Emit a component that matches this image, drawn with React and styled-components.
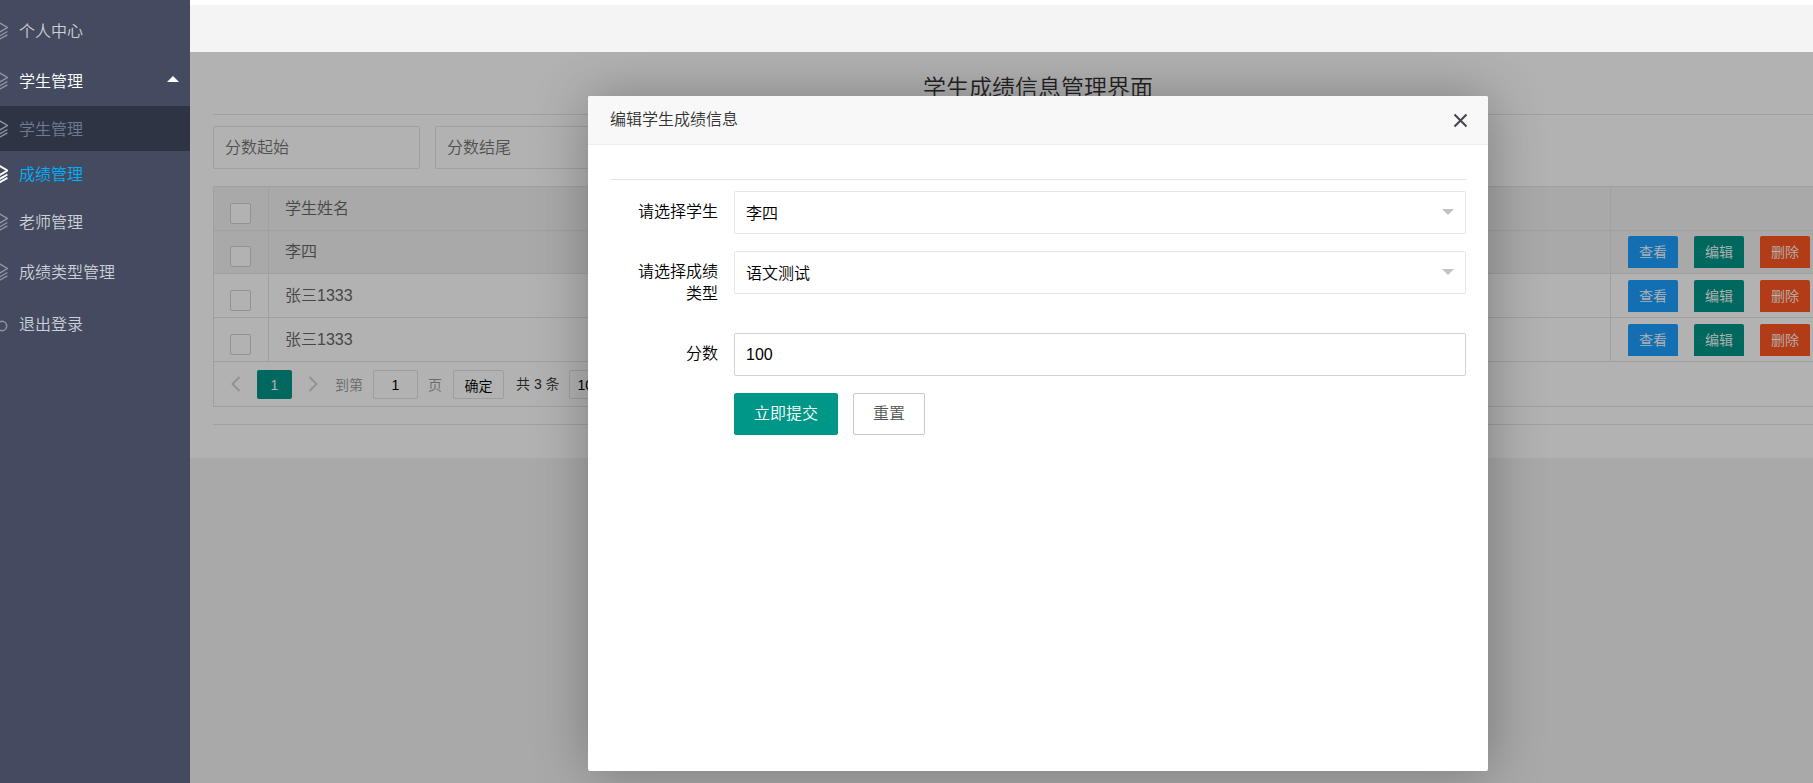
import React from 'react';
import styled, { createGlobalStyle, css } from 'styled-components';

const GlobalStyle = createGlobalStyle`
  * { box-sizing: border-box; }
  body {
    margin: 0;
    overflow: hidden;
    font: 350 16px/22px "Liberation Sans", "Noto Sans CJK SC", sans-serif;
    color: #333;
  }
  button, input, select { font: inherit; color: inherit; margin: 0; }
  button { cursor: pointer; }
`;

const Page = styled.div`
  display: flex;
  height: 100vh;
  overflow: hidden;
`;

const Sidebar = styled.nav`
  flex: 0 0 190px;
  padding-top: 6px;
  background: #444b61;
  overflow: hidden;
`;

const SubMenu = styled.div`
  padding-bottom: 1px;
`;

const MenuLink = styled.a`
  display: flex;
  align-items: center;
  height: ${({ $sub }) => ($sub ? 45 : 50)}px;
  padding-right: 11px;
  background: ${({ $shaded }) => ($shaded ? '#2f3444' : 'transparent')};
  color: ${({ $color }) => $color || '#cdd0d6'};
  text-decoration: none;
`;

const LogoutLink = styled(MenuLink)`
  height: 54px;
`;

const MenuIcon = styled.svg`
  flex: none;
  margin-left: -12px;
  margin-right: 11px;
  color: ${({ $color }) => $color || '#9095a3'};
`;

const MenuCaret = styled.svg`
  margin-bottom: 4px;
`;

const MenuText = styled.span`
  flex: 1;
  padding-top: 2px;
  white-space: nowrap;
`;

const Main = styled.div`
  flex: 1;
  min-width: 0;
  display: flex;
  flex-direction: column;
  overflow: hidden;
`;

const TopBar = styled.header`
  flex: none;
  height: 52px;
  border-top: 5px solid #fff;
  background: #f4f4f4;
`;

/* the framed page is wider than the room beside the menu */
const Pane = styled.main`
  position: relative;
  flex: 1;
  width: calc(100% + 73px);
  background: #f2f2f2;
  overflow: hidden;
`;

const Card = styled.section`
  padding: 20px 23px 33px;
  background: #fff;
`;

const Title = styled.h1`
  margin: 0 0 10px;
  font-size: 23px;
  font-weight: 350;
  line-height: 32px;
  text-align: center;
`;

const Divider = styled.hr`
  height: 1px;
  margin: 0;
  border: 0;
  background: #e6e6e6;
`;

const inputBox = css`
  height: 43px;
  padding: 0 11px;
  border: 1px solid #e6e6e6;
  border-radius: 2px;
  background: #fff;
  outline: none;
`;

const Filters = styled.form`
  display: flex;
  gap: 15px;
  padding: 11px 0 17px;
`;

const FilterInput = styled.input`
  ${inputBox}
  width: 207px;
  &::placeholder { color: #757575; opacity: 1; }
`;

const TableBox = styled.div`
  margin-bottom: 17px;
  border: 1px solid #e6e6e6;
`;

const Table = styled.table`
  width: 100%;
  table-layout: fixed;
  border-collapse: separate;
  border-spacing: 0;
  color: #666;
  tbody tr:first-child td { height: 43px; }
`;

const Row = styled.tr`
  background: ${({ $active }) => ($active ? '#f2f2f2' : '#fff')};
  th, td {
    height: 44px;
    padding: 0 16px;
    border-bottom: 1px solid #e6e6e6;
    border-right: 1px solid #e6e6e6;
    font-weight: 350;
    text-align: left;
  }
  th:first-child, td:first-child { width: 55px; }
  th:last-child, td:last-child { width: 251px; padding-left: 17px; border-right: 0; }
`;

const Check = styled.input`
  appearance: none;
  display: block;
  width: 21px;
  height: 21px;
  margin: 9px 0 0;
  border: 1px solid #d2d2d2;
  border-radius: 2px;
  background: #fff;
`;

const Actions = styled.div`
  display: flex;
  gap: 16px;
`;

const ActionButton = styled.button`
  width: 50px;
  height: 32px;
  padding: 0;
  border: 0;
  border-radius: 2px 2px 0 0;
  background: ${({ $color }) => $color};
  color: #fff;
  font-size: 14px;
`;

const Pager = styled.div`
  display: flex;
  align-items: flex-start;
  height: 44px;
  padding: 8px 0 0 1px;
  font-size: 14px;
  color: #999;
`;

const PageArrow = styled.button`
  display: flex;
  align-items: center;
  justify-content: center;
  width: 42px;
  height: 27px;
  padding: 0;
  border: 0;
  background: none;
  color: #d2d2d2;
`;

const PageNumber = styled.button`
  width: 35px;
  height: 29px;
  padding: 0;
  border: 0;
  border-radius: 2px;
  background: #009688;
  color: #fff;
`;

const PageJump = styled.label`
  display: flex;
  align-items: center;
  gap: 10px;
  margin-left: 1px;
`;

const pagerBox = css`
  height: 29px;
  border: 1px solid #e2e2e2;
  border-radius: 2px;
  background: #fff;
  color: #000;
`;

const PageInput = styled.input`
  ${pagerBox}
  width: 45px;
  padding: 0;
  text-align: center;
`;

const PageConfirm = styled.button`
  ${pagerBox}
  width: 51px;
  margin: 0 12px 0 11px;
  padding: 2px 0 0;
`;

const PageTotal = styled.span`
  margin-right: 9px;
  color: #333;
  line-height: 29px;
`;

const PageSize = styled.select`
  ${pagerBox}
  padding: 0 4px;
`;

const Shade = styled.div`
  position: absolute;
  inset: 0;
  display: flex;
  justify-content: center;
  padding: 44px 0 12px;
  background: rgba(0, 0, 0, 0.3);
`;

const Dialog = styled.section`
  width: 90%;
  max-width: 900px;
  border-radius: 2px;
  background: #fff;
  box-shadow: 1px 1px 56px rgba(0, 0, 0, 0.3);
`;

const DialogHeader = styled.header`
  display: flex;
  align-items: center;
  justify-content: space-between;
  height: 49px;
  padding: 0 20px 0 22px;
  border-bottom: 1px solid #eee;
  border-radius: 2px 2px 0 0;
  background: #f8f8f8;
`;

const DialogTitle = styled.h2`
  margin: 0;
  font-size: 16px;
  font-weight: 350;
`;

const CloseButton = styled.button`
  display: flex;
  padding: 0;
  border: 0;
  background: none;
  color: #45434f;
`;

const DialogBody = styled.div`
  padding: 34px 22px 0 23px;
`;

const Form = styled.form`
  display: flex;
  flex-direction: column;
  gap: 17px;
  padding-top: 11px;
  color: #000;
`;

const FormRow = styled.div`
  display: grid;
  grid-template-columns: 123px 1fr;
  align-items: start;
`;

const Label = styled.label`
  padding: 10px 16px 11px;
  text-align: right;
`;

const Field = styled.div`
  position: relative;
`;

const TextInput = styled.input`
  ${inputBox}
  display: block;
  width: 100%;
  border-color: #d2d2d2;
`;

const Select = styled.select`
  ${inputBox}
  appearance: none;
  display: block;
  width: 100%;
  padding-top: 2px;
`;

const SelectCaret = styled.svg`
  position: absolute;
  top: 18px;
  right: 12px;
  pointer-events: none;
`;

const Buttons = styled.div`
  display: flex;
  gap: 15px;
  margin-left: 123px;
`;

const FormButton = styled.button`
  height: 42px;
  padding: 0 19px;
  border: 1px solid ${({ $primary }) => ($primary ? '#009688' : '#c9c9c9')};
  border-radius: 2px;
  background: ${({ $primary }) => ($primary ? '#009688' : '#fff')};
  color: ${({ $primary }) => ($primary ? '#fff' : '#555')};
`;

const LayersIcon = ({ bold }) => (
  <MenuIcon width="20" height="20" viewBox="0 0 20 20" fill="none" stroke="currentColor"
    strokeWidth={bold ? 2 : 1.4} $color={bold && '#fff'} aria-hidden="true">
    <path d="m10 1 9.4 5.5L10 12 .6 6.5ZM.6 10.5l9.4 5.4 9.4-5.4M.6 13.8l9.4 5.4 9.4-5.4" />
  </MenuIcon>
);

const CircleIcon = () => (
  <MenuIcon width="20" height="20" viewBox="0 0 20 20" fill="none" stroke="currentColor"
    strokeWidth="1.5" aria-hidden="true">
    <circle cx="14" cy="12" r="4.7" />
  </MenuIcon>
);

const Caret = () => (
  <SelectCaret width="12" height="6" viewBox="0 0 12 6" aria-hidden="true">
    <path d="M0 0h12L6 6Z" fill="#c2c2c2" />
  </SelectCaret>
);

const Arrow = ({ d }) => (
  <svg width="10" height="16" viewBox="0 0 10 16" fill="none" stroke="currentColor"
    strokeWidth="2" aria-hidden="true">
    <path d={d} />
  </svg>
);

const students = ['李四', '张三1333', '张三1333'];

const SideMenu = () => (
  <Sidebar>
    <MenuLink href="#"><LayersIcon /><MenuText>个人中心</MenuText></MenuLink>
    <MenuLink href="#" $color="#fff">
      <LayersIcon />
      <MenuText>学生管理</MenuText>
      <MenuCaret width="12" height="6" viewBox="0 0 12 6" aria-hidden="true">
        <path d="M0 6h12L6 0Z" fill="#fff" />
      </MenuCaret>
    </MenuLink>
    <SubMenu>
      <MenuLink href="#" $sub $shaded $color="#6f7a96"><LayersIcon /><MenuText>学生管理</MenuText></MenuLink>
      <MenuLink href="#" $sub $color="#00b0ff"><LayersIcon bold /><MenuText>成绩管理</MenuText></MenuLink>
    </SubMenu>
    <MenuLink href="#"><LayersIcon /><MenuText>老师管理</MenuText></MenuLink>
    <MenuLink href="#"><LayersIcon /><MenuText>成绩类型管理</MenuText></MenuLink>
    <LogoutLink href="#"><CircleIcon /><MenuText>退出登录</MenuText></LogoutLink>
  </Sidebar>
);

const ScoreTable = () => (
  <TableBox>
    <Table>
      <thead>
        <Row $active>
          <th><Check type="checkbox" aria-label="全选" /></th>
          <th>学生姓名</th>
          <th />
        </Row>
      </thead>
      <tbody>
        {students.map((name, i) => (
          <Row key={i} $active={i === 0}>
            <td><Check type="checkbox" aria-label={name} /></td>
            <td>{name}</td>
            <td>
              <Actions>
                <ActionButton type="button" $color="#1e9fff">查看</ActionButton>
                <ActionButton type="button" $color="#009688">编辑</ActionButton>
                <ActionButton type="button" $color="#ff5722">删除</ActionButton>
              </Actions>
            </td>
          </Row>
        ))}
      </tbody>
    </Table>
    <Pager>
      <PageArrow type="button" aria-label="上一页"><Arrow d="M8.5 1 1.5 8l7 7" /></PageArrow>
      <PageNumber type="button">1</PageNumber>
      <PageArrow type="button" aria-label="下一页"><Arrow d="m1.5 1 7 7-7 7" /></PageArrow>
      <PageJump>到第<PageInput type="text" defaultValue="1" />页</PageJump>
      <PageConfirm type="button">确定</PageConfirm>
      <PageTotal>共 3 条</PageTotal>
      <PageSize aria-label="每页条数"><option>10 条/页</option></PageSize>
    </Pager>
  </TableBox>
);

const EditDialog = () => (
  <Dialog role="dialog" aria-labelledby="dialog-title">
    <DialogHeader>
      <DialogTitle id="dialog-title">编辑学生成绩信息</DialogTitle>
      <CloseButton type="button" aria-label="关闭">
        <svg width="15" height="15" viewBox="0 0 15 15" fill="none" stroke="currentColor" strokeWidth="2">
          <path d="m1.5 1.5 12 12m0-12-12 12" />
        </svg>
      </CloseButton>
    </DialogHeader>
    <DialogBody>
      <Divider />
      <Form onSubmit={(e) => e.preventDefault()}>
        <FormRow>
          <Label htmlFor="student">请选择学生</Label>
          <Field>
            <Select id="student"><option>李四</option></Select>
            <Caret />
          </Field>
        </FormRow>
        <FormRow>
          <Label htmlFor="type">请选择成绩类型</Label>
          <Field>
            <Select id="type"><option>语文测试</option></Select>
            <Caret />
          </Field>
        </FormRow>
        <FormRow>
          <Label htmlFor="score">分数</Label>
          <TextInput id="score" type="text" defaultValue="100" />
        </FormRow>
        <Buttons>
          <FormButton type="submit" $primary>立即提交</FormButton>
          <FormButton type="reset">重置</FormButton>
        </Buttons>
      </Form>
    </DialogBody>
  </Dialog>
);

const App = () => (
  <Page>
    <GlobalStyle />
    <SideMenu />
    <Main>
      <TopBar />
      <Pane>
        <Card>
          <Title>学生成绩信息管理界面</Title>
          <Divider />
          <Filters>
            <FilterInput type="text" placeholder="分数起始" aria-label="分数起始" />
            <FilterInput type="text" placeholder="分数结尾" aria-label="分数结尾" />
          </Filters>
          <ScoreTable />
          <Divider />
        </Card>
        <Shade>
          <EditDialog />
        </Shade>
      </Pane>
    </Main>
  </Page>
);

export default App;
